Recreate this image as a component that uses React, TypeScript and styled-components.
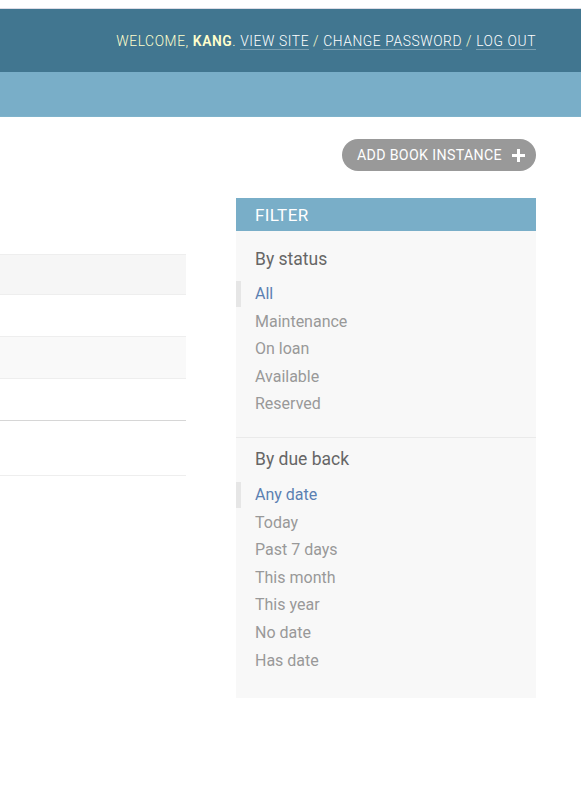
import styled, { createGlobalStyle } from 'styled-components';

const GlobalStyle = createGlobalStyle`
  html, body {
    margin: 0;
    padding: 0;
    background: #fff;
    font-family: Roboto, "Liberation Sans", Arial, sans-serif;
  }
  * {
    box-sizing: border-box;
  }
`;

const Page = styled.div`
  width: 581px;
  min-height: 806px;
  overflow: hidden;
`;

const TopStrip = styled.div`
  height: 9px;
  border-bottom: 1px solid #dcdce6;
`;

const Header = styled.div`
  height: 63px;
  background: #417690;
  display: flex;
  align-items: center;
  justify-content: flex-end;
  padding: 0 45px 0 0;
`;

const UserTools = styled.div`
  color: #ffc;
  font-size: 13.8px;
  font-weight: 300;
  letter-spacing: 0.6px;
  text-transform: uppercase;
  white-space: nowrap;

  strong {
    font-weight: 600;
  }
`;

const ToolLink = styled.a`
  color: #fff;
  text-decoration: none;
  border-bottom: 1px solid rgba(255, 255, 255, 0.3);
`;

const Breadcrumbs = styled.div`
  height: 45px;
  background: #79aec8;
  border-bottom: 1px solid #7fb3cb;
`;

const Content = styled.div`
  padding: 22px 45px 0 0;
`;

const ObjectTools = styled.div`
  display: flex;
  justify-content: flex-end;
  margin-bottom: 27px;
`;

const AddButton = styled.a`
  display: inline-flex;
  align-items: center;
  gap: 10px;
  height: 32px;
  padding: 0 11px 0 15px;
  border-radius: 16px;
  background: #999;
  color: #fff;
  font-size: 14.2px;
  font-weight: 400;
  letter-spacing: 0.35px;
  text-transform: uppercase;
  text-decoration: none;
`;

const Layout = styled.div`
  display: flex;
  align-items: flex-start;
  gap: 50px;
`;

const ResultList = styled.div`
  width: 186px;
  margin-top: 56px;
  border-top: 1px solid #eee;
`;

const Row = styled.div<{ $height: number; $bg: string; $line?: string }>`
  height: ${p => p.$height}px;
  background: ${p => p.$bg};
  border-bottom: 1px solid ${p => p.$line || '#eee'};
`;

const Filter = styled.div`
  width: 300px;
  background: #f8f8f8;
  padding-bottom: 23px;
`;

const FilterTitle = styled.h2`
  margin: 0;
  height: 33px;
  display: flex;
  align-items: center;
  padding: 1px 0 0 19px;
  background: #79aec8;
  color: #fff;
  font-size: 17px;
  font-weight: 400;
  letter-spacing: 0.4px;
  text-transform: uppercase;
`;

const FilterHeading = styled.h3<{ $first?: boolean }>`
  margin: ${p => (p.$first ? '18px 0 12px' : '11px 0 13px')};
  padding-left: 19px;
  font-size: 17.5px;
  line-height: 20px;
  font-weight: 400;
  color: #666;
`;

const FilterList = styled.ul<{ $last?: boolean }>`
  list-style: none;
  margin: 0;
  padding: 0 0 ${p => (p.$last ? '0' : '18px')};
  border-bottom: ${p => (p.$last ? 'none' : '1px solid #eaeaea')};
`;

const FilterItem = styled.li<{ $selected?: boolean }>`
  height: 26px;
  line-height: 26px;
  margin-bottom: 1.6px;
  font-size: 16px;
  padding-left: ${p => (p.$selected ? '14px' : '19px')};
  border-left: ${p => (p.$selected ? '5px solid #e6e6e6' : 'none')};
  color: ${p => (p.$selected ? '#5b80b2' : '#999')};
`;

const PlusIcon = () => (
  <svg width="13" height="13" viewBox="0 0 13 13">
    <path d="M5 0h3v5h5v3H8v5H5V8H0V5h5z" fill="#fff" />
  </svg>
);

const rows = [
  { height: 40, bg: '#f6f6f6' },
  { height: 42, bg: '#fff' },
  { height: 42, bg: '#f9f9f9' },
  { height: 42, bg: '#fff', line: '#d6d6d6' },
  { height: 55, bg: '#fff' },
];

const filters = [
  { title: 'By status', items: ['All', 'Maintenance', 'On loan', 'Available', 'Reserved'] },
  {
    title: 'By due back',
    items: ['Any date', 'Today', 'Past 7 days', 'This month', 'This year', 'No date', 'Has date'],
  },
];

const App = () => {
  return (
    <Page>
      <GlobalStyle />
      <TopStrip />
      <Header>
        <UserTools>
          Welcome, <strong>kang</strong>. <ToolLink href="#">View site</ToolLink> /{' '}
          <ToolLink href="#">Change password</ToolLink> / <ToolLink href="#">Log out</ToolLink>
        </UserTools>
      </Header>
      <Breadcrumbs />
      <Content>
        <ObjectTools>
          <AddButton href="#">
            Add book instance
            <PlusIcon />
          </AddButton>
        </ObjectTools>
        <Layout>
          <ResultList>
            {rows.map((r, i) => (
              <Row key={i} $height={r.height} $bg={r.bg} $line={r.line} />
            ))}
          </ResultList>
          <Filter>
            <FilterTitle>Filter</FilterTitle>
            {filters.map((f, i) => (
              <div key={f.title}>
                <FilterHeading $first={i === 0}>{f.title}</FilterHeading>
                <FilterList $last={i === filters.length - 1}>
                  {f.items.map((item, j) => (
                    <FilterItem key={item} $selected={j === 0}>
                      {item}
                    </FilterItem>
                  ))}
                </FilterList>
              </div>
            ))}
          </Filter>
        </Layout>
      </Content>
    </Page>
  );
};

export default App;
